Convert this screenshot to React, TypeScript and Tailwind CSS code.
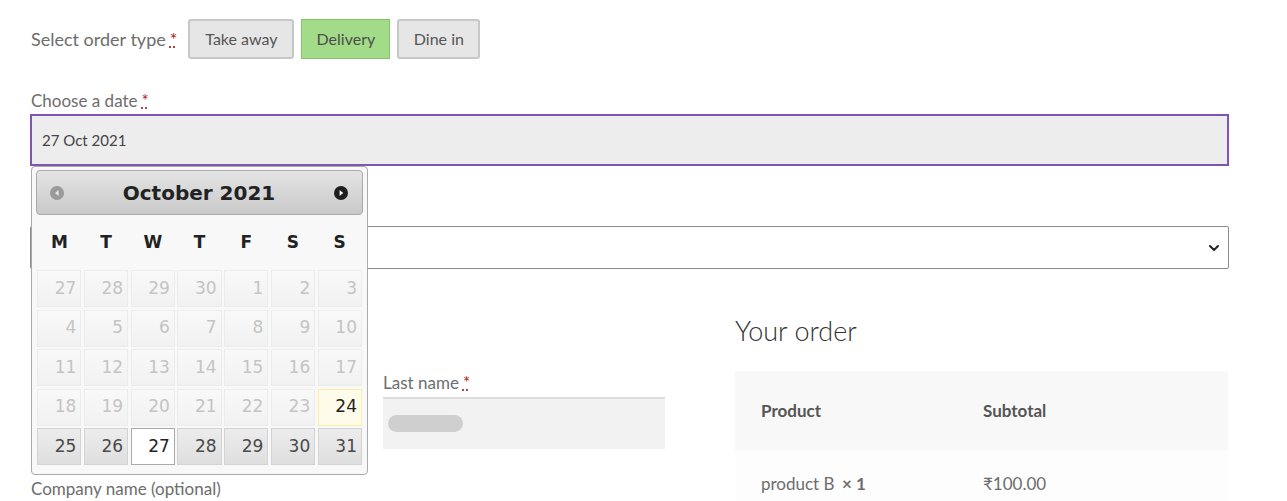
import { ChevronDown } from "lucide-react";

type Cell = { day: number; state: "off" | "on" | "today" | "picked" };

const weeks: Cell[][] = [
  [27, 28, 29, 30, 1, 2, 3].map((d) => ({ day: d, state: "off" as const })),
  [4, 5, 6, 7, 8, 9, 10].map((d) => ({ day: d, state: "off" as const })),
  [11, 12, 13, 14, 15, 16, 17].map((d) => ({ day: d, state: "off" as const })),
  [
    ...[18, 19, 20, 21, 22, 23].map((d) => ({ day: d, state: "off" as const })),
    { day: 24, state: "today" as const },
  ],
  [
    { day: 25, state: "on" as const },
    { day: 26, state: "on" as const },
    { day: 27, state: "picked" as const },
    { day: 28, state: "on" as const },
    { day: 29, state: "on" as const },
    { day: 30, state: "on" as const },
    { day: 31, state: "on" as const },
  ],
];

const cellStyle = {
  off: "border-[#ececec] bg-gradient-to-b from-[#f9f9f9] to-[#f1f1f1] text-[#c4c4c4]",
  on: "border-[#d3d3d3] bg-gradient-to-b from-[#ececec] via-[#e6e6e6] to-[#dedede] text-[#4a4a4a]",
  today: "border-[#fcefa1] bg-[#fffbea] text-[#222]",
  picked: "border-[#aaaaaa] bg-white text-[#222]",
};

const Required = () => (
  <span className="ml-1 text-[#b22222] underline decoration-dotted">*</span>
);

const Datepicker = () => (
  <div
    className="absolute left-[31px] top-[166px] z-10 w-[337px] rounded-[4px] border border-[#aaaaaa] bg-[#f8f8f8] px-[4px] pb-[9px] pt-[3px]"
    style={{ fontFamily: '"DejaVu Sans", Verdana, sans-serif' }}
  >
    <div className="flex h-[45px] items-center justify-between rounded-[4px] border border-[#aaaaaa] bg-gradient-to-b from-[#e4e4e4] to-[#c9c9c9] pl-[13px] pr-[14px]">
      <svg width="14" height="14" viewBox="0 0 14 14">
        <circle cx="7" cy="7" r="7" fill="#9a9a9a" />
        <path d="M8.6 4 L5 7 L8.6 10 Z" fill="#e6e6e6" />
      </svg>
      <span className="text-[20px] font-bold text-[#222]">October 2021</span>
      <svg width="14" height="14" viewBox="0 0 14 14">
        <circle cx="7" cy="7" r="7" fill="#1e1e1e" />
        <path d="M5.6 4 L9.2 7 L5.6 10 Z" fill="#ffffff" />
      </svg>
    </div>
    <div className="grid h-[55px] grid-cols-7 items-center text-center text-[17px] font-bold text-[#222]">
      {["M", "T", "W", "T", "F", "S", "S"].map((d, i) => (
        <span key={i}>{d}</span>
      ))}
    </div>
    <div className="grid grid-cols-7 gap-x-[2.5px] gap-y-[2.5px] px-[1px]">
      {weeks.flat().map((c, i) => (
        <div
          key={i}
          className={`flex h-[37px] items-center justify-end border pr-[4px] text-[17px] ${cellStyle[c.state]}`}
        >
          {c.day}
        </div>
      ))}
    </div>
  </div>
);

const App = () => {
  return (
    <div
      className="relative h-[501px] overflow-hidden bg-white pl-[30px] text-[#6d6d6d]"
      style={{ fontFamily: 'Lato, "Open Sans", sans-serif' }}
    >
      <div className="w-[1199px]">
        <div className="flex h-[78px] items-center">
          <span className="mr-[11px] pl-[1px] text-[18px] text-[#6d6d6d]">
            Select order type
            <Required />
          </span>
          <div className="flex gap-[7px]">
            <span className="flex h-[40px] w-[106px] items-center justify-center rounded-[3px] border-2 border-[#c7c7c7] bg-[#e6e6e6] text-[16px] text-[#555]">
              Take away
            </span>
            <span className="flex h-[40px] w-[89px] items-center justify-center border border-[#85c46a] bg-[#a3dc89] text-[16px] text-[#4d4d4d]">
              Delivery
            </span>
            <span className="flex h-[40px] w-[83px] items-center justify-center rounded-[3px] border-2 border-[#c7c7c7] bg-[#e6e6e6] text-[16px] text-[#555]">
              Dine in
            </span>
          </div>
        </div>

        <div className="pl-[1px] pt-[12px] text-[17px] leading-[22px]">
          Choose a date
          <Required />
        </div>
        <div className="mt-[2px] flex h-[52px] items-center border-2 border-[#7f54b3] bg-[#ededed] px-[10px] text-[15px] text-[#444]">
          27 Oct 2021
        </div>

        {/* label of the time field sits under the open datepicker */}
        <div className="h-[60px]" />
        <div className="flex h-[43px] items-center justify-end rounded-[2px] border border-[#8a8a8a] bg-white pr-[6px]">
          <ChevronDown size={16} strokeWidth={3} className="text-[#222]" />
        </div>

        <div className="mt-[42px] flex gap-[70px] pl-[1px]">
          <div className="w-[634px]">
            <div className="h-[40px]" />
            <div className="mt-[21px] flex gap-[18px]">
              <div className="w-[334px]">
                <div className="h-[22px]" />
                <div className="mt-[4px] h-[52px] bg-[#f2f2f2] shadow-[inset_0_1px_0_#dcdcdc]" />
              </div>
              <div className="w-[282px]">
                <div className="text-[17px] leading-[22px]">
                  Last name
                  <Required />
                </div>
                <div className="mt-[3px] flex h-[52px] items-center bg-[#f2f2f2] pl-[5px] shadow-[inset_0_2px_0_#dcdcdc]">
                  <span className="h-[17px] w-[75px] rounded-full bg-[#cfcfcf] blur-[0.5px]" />
                </div>
              </div>
            </div>
            <div className="mt-[28px] text-[17px] leading-[22px]">
              Company name (optional)
            </div>
          </div>

          <div className="w-[493px]">
            <h3 className="text-[27px] font-light leading-[40px] text-[#333]">
              Your order
            </h3>
            <div className="mt-[20px]">
              <div className="flex h-[79px] items-center bg-[#f8f8f8] pl-[26px] text-[17px] font-bold text-[#555]">
                <span className="w-[222px]">Product</span>
                <span>Subtotal</span>
              </div>
              <div className="flex h-[68px] items-center bg-[#fdfdfd] pl-[26px] text-[17px] text-[#6d6d6d]">
                <span className="w-[222px]">
                  product B <span className="ml-[3px] font-bold">× 1</span>
                </span>
                <span>₹100.00</span>
              </div>
            </div>
          </div>
        </div>
      </div>

      <Datepicker />
    </div>
  );
};

export default App;
